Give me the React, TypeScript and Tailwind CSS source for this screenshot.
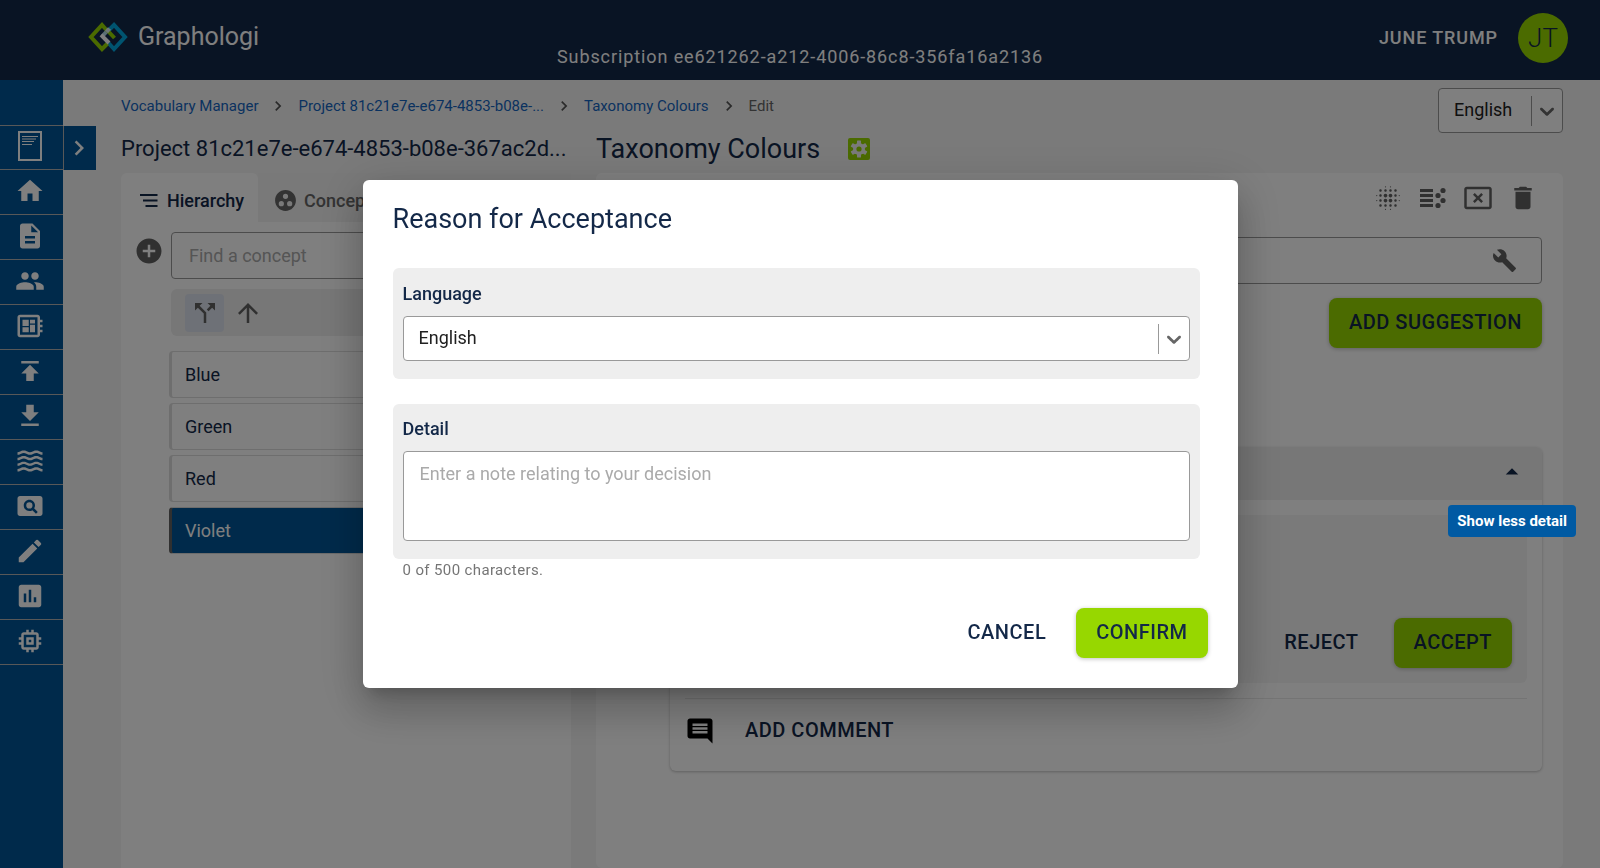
import type { ReactNode } from "react";
import {
  MdAddCircle,
  MdArrowDropUp,
  MdArrowUpward,
  MdAssessment,
  MdBlurOn,
  MdBuild,
  MdCallSplit,
  MdChevronRight,
  MdComment,
  MdCreate,
  MdDelete,
  MdDescription,
  MdGroupWork,
  MdHome,
  MdPageview,
  MdPeople,
  MdPublish,
  MdGetApp,
  MdMemory,
  MdWaves,
  MdOutlineCancelPresentation,
  MdOutlineDeveloperBoard,
} from "react-icons/md";

function Logo() {
  return (
    <svg width="40" height="30" viewBox="0 0 40 30" aria-hidden="true">
      <g fill="none" strokeWidth="4">
        <path d="M20 9 L26 3 L37 15 L26 27 L20.500 21" stroke="#00a9e0" />
        <path d="M19.500 21.500 L14 27 L3 15 L14 3 L18.500 8" stroke="#97d700" />
        <path d="M14.500 14 L20.500 7.500" stroke="#b4dcea" />
        <path d="M18.500 7.500 L26.500 16" stroke="#97d700" />
        <path d="M18.500 10 L21.500 6.500" stroke="#dfeef2" />
        <path d="M13 12.800 L21 21" stroke="#ffffff" />
      </g>
    </svg>
  );
}

function GlossaryIcon() {
  return (
    <svg width="24" height="30" viewBox="0 0 24 30" fill="none" stroke="currentColor" aria-hidden="true">
      <rect x="1" y="1" width="22" height="28" strokeWidth="2" />
      <path d="M4 5.500H20M4 8H18M4 10.500H16M4 13.500H14" strokeWidth="1.200" />
    </svg>
  );
}

function HierarchyIcon() {
  return (
    <svg width="18" height="14" viewBox="0 0 18 14" fill="currentColor" aria-hidden="true">
      <path d="M0 0h17.500v2H0zM3 5.500h14.500v2H3zM5.500 11h12v2h-12z" />
    </svg>
  );
}

function LinesAndDotsIcon() {
  return (
    <svg width="28" height="22" viewBox="0 0 28 22" fill="currentColor" aria-hidden="true">
      <path d="M1 2h13v3H1zM1 7h13v3H1zM1 12h13v3H1zM1 17h13v3H1z" />
      <circle cx="24" cy="3.500" r="2.600" />
      <circle cx="19" cy="8.500" r="2.600" />
      <circle cx="24" cy="13.500" r="2.600" />
      <circle cx="19" cy="18.500" r="2.600" />
    </svg>
  );
}

function SettingsTileIcon() {
  return (
    <svg width="22" height="22" viewBox="0 0 22 22" aria-hidden="true">
      <rect width="22" height="22" rx="2" fill="#97d700" />
      <g transform="translate(11 11)" fill="#f5f5f5">
        {[0, 60, 120].map((angle) => (
          <rect key={angle} x="-2" y="-8.500" width="4" height="17" rx="0.500" transform={`rotate(${angle})`} />
        ))}
        <circle r="6" />
      </g>
      <circle cx="11" cy="11" r="2.600" fill="#97d700" />
    </svg>
  );
}

function SelectChevron() {
  return (
    <svg width="24" height="24" viewBox="0 0 20 20" fill="currentColor" aria-hidden="true">
      <path d="M4.516 7.548c0.436-0.446 1.043-0.481 1.576 0l3.908 3.747 3.908-3.747c0.533-0.481 1.141-0.446 1.574 0 0.436 0.445 0.408 1.197 0 1.615-0.406 0.418-4.695 4.502-4.695 4.502-0.217 0.223-0.502 0.335-0.787 0.335s-0.570-0.112-0.789-0.335c0 0-4.287-4.084-4.695-4.502s-0.436-1.170 0-1.615z" />
    </svg>
  );
}

function LanguageSelect({ id, label }: { id: string; label?: string }) {
  return (
    <div className="flex h-[45px] items-center rounded border border-[#999999] bg-white">
      <select
        id={id}
        aria-label={label}
        className="h-full min-w-0 flex-1 appearance-none bg-transparent pb-0.5 pl-[15px] text-lg text-[#212121] outline-none"
      >
        <option>English</option>
      </select>
      <span className="h-[30px] w-px bg-[#999999]" />
      <span className="flex w-[30px] justify-center text-[#666666]">
        <SelectChevron />
      </span>
    </div>
  );
}

function PrimaryButton({ children }: { children: ReactNode }) {
  return (
    <button
      type="button"
      className="h-[50px] rounded-lg bg-[#97d700] px-5 pb-0.5 text-xl font-medium tracking-wide text-[#132848] uppercase shadow-[0_1px_4px_rgba(0,0,0,0.25)]"
    >
      {children}
    </button>
  );
}

function TextButton({ children }: { children: ReactNode }) {
  return (
    <button
      type="button"
      className="h-[50px] px-[30px] pb-0.5 text-xl font-medium tracking-wide text-[#132848] uppercase"
    >
      {children}
    </button>
  );
}

const navItems = [
  { label: "Home", icon: <MdHome /> },
  { label: "Documents", icon: <MdDescription /> },
  { label: "People", icon: <MdPeople /> },
  { label: "Dashboard", icon: <MdOutlineDeveloperBoard /> },
  { label: "Publish", icon: <MdPublish /> },
  { label: "Download", icon: <MdGetApp /> },
  { label: "Streams", icon: <MdWaves /> },
  { label: "Search", icon: <MdPageview /> },
  { label: "Edit", icon: <MdCreate /> },
  { label: "Reports", icon: <MdAssessment /> },
  { label: "System", icon: <MdMemory /> },
];

const concepts = ["Blue", "Green", "Red", "Violet"];

function Header() {
  return (
    <header className="grid h-20 grid-cols-[1fr_auto_1fr] bg-[#132848] text-white">
      <a href="#home" className="flex items-center gap-[10px] self-start pt-[19px] pl-[88px]">
        <Logo />
        <span className="text-[25px] leading-9">Graphologi</span>
      </a>
      <p className="self-end pb-[9px] text-lg tracking-wider">
        Subscription ee621262-a212-4006-86c8-356fa16a2136
      </p>
      <div className="flex items-center justify-end gap-5 self-start pt-[13px] pr-8">
        <span className="text-lg font-medium tracking-wider">JUNE TRUMP</span>
        <span className="flex size-[50px] items-center justify-center rounded-full bg-[#97d700] text-[26px] font-light text-[#132848]">
          JT
        </span>
      </div>
    </header>
  );
}

function SideNav() {
  return (
    <nav aria-label="Main" className="w-[63px] shrink-0 bg-[#005596] pt-[45px] text-white">
      <a
        href="#glossary"
        aria-label="Glossary"
        className="flex h-[45px] items-center justify-center border-y border-[#b0b0b0] pr-1 pb-1"
      >
        <GlossaryIcon />
      </a>
      {navItems.map((item) => (
        <a
          key={item.label}
          href="#nav"
          aria-label={item.label}
          className="flex h-[45px] items-center justify-center border-b border-[#b0b0b0] pr-1 pb-0.5 text-[30px]"
        >
          {item.icon}
        </a>
      ))}
    </nav>
  );
}

function Crumbs() {
  return (
    <nav aria-label="Breadcrumb" className="flex items-center pt-2 text-[15px] leading-5 text-[#1565c0]">
      <a href="#vocabulary">Vocabulary Manager</a>
      <MdChevronRight className="mx-[10px] text-xl text-[#555555]" />
      <a href="#project">Project 81c21e7e-e674-4853-b08e-...</a>
      <MdChevronRight className="mx-[10px] text-xl text-[#555555]" />
      <a href="#taxonomy">Taxonomy Colours</a>
      <MdChevronRight className="mx-[10px] text-xl text-[#555555]" />
      <span className="text-[#666666]">Edit</span>
    </nav>
  );
}

function ConceptPanel() {
  return (
    <section className="flex w-[450px] shrink-0 flex-col">
      <h2 className="mb-2 h-8 truncate text-[22px] leading-8 text-[#132848]">
        Project 81c21e7e-e674-4853-b08e-367ac2d...
      </h2>
      <div className="flex h-[49px]">
        <button
          type="button"
          className="flex w-[137px] items-center gap-[9px] rounded-t-md bg-white pt-1.5 pl-[19px] text-lg font-medium text-[#132848]"
        >
          <HierarchyIcon />
          Hierarchy
        </button>
        <button
          type="button"
          className="flex flex-1 items-center gap-1.5 bg-[#f2f2f2] pt-1.5 pl-[15px] text-lg font-medium text-[#666666]"
        >
          <MdGroupWork className="text-[25px]" />
          Concepts
        </button>
      </div>
      <div className="flex flex-1 gap-[7px] bg-white pt-2.5 pr-5 pl-[13px]">
        <button type="button" aria-label="Add concept" className="h-[38px] text-[30px] text-[#616161]">
          <MdAddCircle />
        </button>
        <div className="min-w-0 flex-1">
          <input
            type="text"
            aria-label="Find a concept"
            placeholder="Find a concept"
            className="h-[47px] w-full rounded border border-[#999999] px-[17px] text-lg placeholder:text-[#aaaaaa]"
          />
          <div className="mt-[10px] flex h-[47px] items-center gap-1 rounded-md bg-[#eeeeee] px-[14px] text-[30px] text-[#616161]">
            <button
              type="button"
              aria-label="Tree view"
              className="flex h-[38px] w-[39px] items-center justify-center rounded bg-[#dde3ee]"
            >
              <MdCallSplit className="text-[30px]" />
            </button>
            <button type="button" aria-label="Sort ascending" className="flex h-[38px] w-[39px] items-center justify-center">
              <MdArrowUpward className="text-[30px]" />
            </button>
          </div>
          <ul className="mt-[15px] -ml-0.5 flex flex-col gap-[5px] text-lg">
            {concepts.map((name) => (
              <li
                key={name}
                className={
                  name === "Violet"
                    ? "h-[47px] rounded border border-l-3 border-[#d8d8d8] border-l-[#616161] bg-[#005596] px-[13px] leading-[45px] text-white"
                    : "h-[47px] rounded border border-l-3 border-[#dddddd] bg-white px-[13px] leading-[45px] text-[#132848]"
                }
              >
                {name}
              </li>
            ))}
          </ul>
        </div>
      </div>
    </section>
  );
}

function TaxonomyPanel() {
  return (
    <section className="flex min-w-0 flex-1 flex-col">
      <div className="mb-2 flex h-8 items-center gap-7">
        <h1 className="text-[27px] leading-8 text-[#132848]">Taxonomy Colours</h1>
        <button type="button" aria-label="Taxonomy settings">
          <SettingsTileIcon />
        </button>
      </div>
      <div className="flex-1 rounded-md bg-white px-[21px]">
        <div className="flex h-[50px] items-center justify-end gap-[15px] pr-1 text-[30px] text-[#616161]">
          <button type="button" aria-label="Blur">
            <MdBlurOn />
          </button>
          <button type="button" aria-label="Lines and dots" className="flex w-[30px] justify-center">
            <LinesAndDotsIcon />
          </button>
          <button type="button" aria-label="Close view">
            <MdOutlineCancelPresentation />
          </button>
          <button type="button" aria-label="Delete">
            <MdDelete />
          </button>
        </div>
        <div className="mt-[14px] flex h-[47px] items-center rounded border border-[#999999] pr-6">
          <input type="text" aria-label="Concept name" className="h-full min-w-0 flex-1 px-4 text-lg outline-none" />
          <MdBuild className="text-[25px] text-[#616161]" />
        </div>
        <div className="mt-[14px] flex justify-end">
          <PrimaryButton>Add suggestion</PrimaryButton>
        </div>
        <article className="mt-[99px] ml-[53px] rounded-md bg-white shadow-[0_1px_3px_rgba(0,0,0,0.25)]">
          <div className="flex h-[53px] items-center justify-end rounded-t-md bg-[#eeeeee] pr-[15px] pb-1 text-[30px] text-[#132848]">
            <button type="button" aria-label="Show less detail">
              <MdArrowDropUp />
            </button>
          </div>
          <div className="px-[15px] pt-[15px]">
            <div className="flex h-[168px] items-end justify-end gap-[5px] rounded-md bg-[#f5f5f5] p-[15px]">
              <TextButton>Reject</TextButton>
              <PrimaryButton>Accept</PrimaryButton>
            </div>
            <div className="mt-[15px] flex h-[73px] items-center border-t border-[#e8e8e8] pb-2">
              <MdComment className="text-[30px] text-black" />
              <TextButton>Add comment</TextButton>
            </div>
          </div>
        </article>
      </div>
    </section>
  );
}

function ReasonDialog() {
  return (
    <div
      role="dialog"
      aria-modal="true"
      aria-labelledby="dialog-title"
      className="w-full max-w-[875px] rounded-md bg-white px-[30px] pt-[21px] pb-[30px] text-[#132848] shadow-[0_11px_15px_-7px_rgba(0,0,0,0.2),0_24px_38px_3px_rgba(0,0,0,0.14),0_9px_46px_8px_rgba(0,0,0,0.12)]"
    >
      <h2 id="dialog-title" className="text-[27px] leading-9">
        Reason for Acceptance
      </h2>
      <div className="mt-[31px] mr-2 rounded-md bg-[#eeeeee] px-[10px] pt-3 pb-[18px]">
        <label htmlFor="reason-language" className="mb-2 block text-lg font-medium">
          Language
        </label>
        <LanguageSelect id="reason-language" />
      </div>
      <div className="mt-[25px] mr-2 rounded-md bg-[#eeeeee] px-[10px] pt-[11px] pb-[18px]">
        <label htmlFor="reason-detail" className="mb-2 block text-lg font-medium">
          Detail
        </label>
        <textarea
          id="reason-detail"
          placeholder="Enter a note relating to your decision"
          className="block h-[90px] w-full resize-none rounded border border-[#999999] bg-white px-4 py-2 text-lg placeholder:text-[#aaaaaa]"
        />
      </div>
      <p className="pl-[10px] text-[15px] leading-[22px] tracking-wide text-[#757575]">0 of 500 characters.</p>
      <div className="mt-[27px] flex justify-end">
        <TextButton>Cancel</TextButton>
        <PrimaryButton>Confirm</PrimaryButton>
      </div>
    </div>
  );
}

export default function App() {
  return (
    <div className="flex min-h-screen flex-col bg-[#f5f5f5] font-[Roboto,sans-serif]">
      <Header />
      <div className="flex flex-1">
        <SideNav />
        <div className="w-[58px] shrink-0 pt-[46px]">
          <button
            type="button"
            aria-label="Expand menu"
            className="flex h-11 w-[33px] items-center justify-center border-l border-[#b0b0b0] bg-[#005596] pr-0.5 text-[30px] text-white"
          >
            <MdChevronRight />
          </button>
        </div>
        <main className="flex min-w-0 flex-1 flex-col pt-2 pr-[37px]">
          <div className="flex h-[45px] items-start justify-between">
            <Crumbs />
            <div className="w-[125px]">
              <LanguageSelect id="page-language" label="Language" />
            </div>
          </div>
          <div className="flex flex-1 gap-[25px]">
            <ConceptPanel />
            <TaxonomyPanel />
          </div>
        </main>
      </div>
      <div className="fixed inset-0 flex items-center justify-center bg-black/50">
        <ReasonDialog />
      </div>
      <div
        role="tooltip"
        className="absolute top-[505px] right-6 rounded bg-[#005aa3] px-[9px] text-[15px] leading-8 font-bold text-white"
      >
        Show less detail
      </div>
    </div>
  );
}
